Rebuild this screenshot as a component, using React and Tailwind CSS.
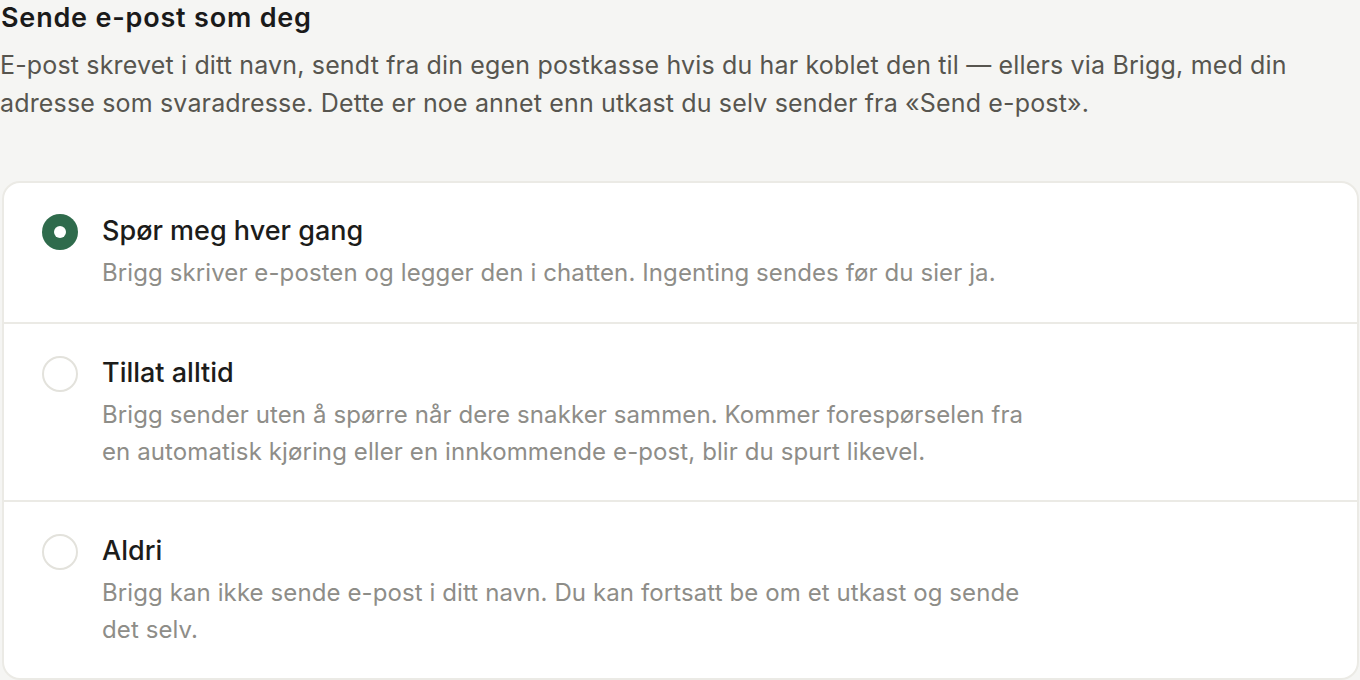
import React from "react";

const options = [
  {
    title: "Spør meg hver gang",
    desc: "Brigg skriver e-posten og legger den i chatten. Ingenting sendes før du sier ja.",
    selected: true,
  },
  {
    title: "Tillat alltid",
    desc: "Brigg sender uten å spørre når dere snakker sammen. Kommer forespørselen fra en automatisk kjøring eller en innkommende e-post, blir du spurt likevel.",
  },
  {
    title: "Aldri",
    desc: "Brigg kan ikke sende e-post i ditt navn. Du kan fortsatt be om et utkast og sende det selv.",
  },
];

function Radio({ selected }) {
  if (selected) {
    return (
      <div className="mt-px w-9 h-9 rounded-full bg-[#2f6b4c] flex items-center justify-center shrink-0">
        <div className="w-3 h-3 rounded-full bg-white" />
      </div>
    );
  }
  return <div className="mt-px w-9 h-9 rounded-full border-2 border-[#e3e2dc] bg-white shrink-0" />;
}

export default function App() {
  return (
    <div className="w-[1360px] h-[680px] overflow-hidden bg-[#f5f5f3] font-['Inter','Noto_Sans',sans-serif]">
      <h1 className="text-[27px] leading-[36px] font-semibold text-[#1a1a1a] pl-[1px] tracking-[0.8px]">
        Sende e-post som deg
      </h1>
      <p className="mt-[10px] text-[25px] leading-[38px] text-[#57554f] tracking-[0.16px] pr-[50px]">
        E-post skrevet i ditt navn, sendt fra din egen postkasse hvis du har koblet den til — ellers via Brigg, med din adresse som svaradresse. Dette er noe annet enn utkast du selv sender fra «Send e-post».
      </p>
      <div className="mt-[59px] ml-[2px] mr-[1px] bg-white border-2 border-[#ebeae5] rounded-[18px] overflow-hidden">
        {options.map((o, i) => (
          <div
            key={i}
            className={
              i === 0
                ? "flex gap-[24px] pl-[38px] pr-10 pt-[30px] pb-[31px]"
                : "flex gap-[24px] pl-[38px] pr-10 pt-[31px] pb-[30px] border-t-2 border-[#ebeae5]"
            }
          >
            <Radio selected={o.selected} />
            <div className="flex-1">
              <div className="text-[27px] leading-[36px] font-medium text-[#1c1c1a]">{o.title}</div>
              <div className="mt-[5px] text-[24px] leading-[37px] text-[#8e8d88] tracking-[0.1px] max-w-[945px]">{o.desc}</div>
            </div>
          </div>
        ))}
      </div>
    </div>
  );
}
